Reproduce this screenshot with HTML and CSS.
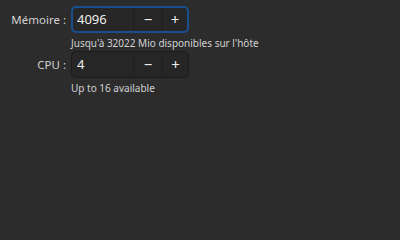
FILE: index.html
```html
<!DOCTYPE html>
<html>
<head>
<meta charset="utf-8">
<link rel="stylesheet" href="styles.css">
</head>
<body>
<div class="form">
  <div class="label">Mémoire :</div>
  <div class="spin focused">
    <div class="value">4096</div>
    <div class="btn">−</div>
    <div class="btn">+</div>
  </div>
  <div class="hint">Jusqu'à 32022 Mio disponibles sur l'hôte</div>
  <div class="label">CPU :</div>
  <div class="spin">
    <div class="value">4</div>
    <div class="btn">−</div>
    <div class="btn">+</div>
  </div>
  <div class="hint">Up to 16 available</div>
</div>
</body>
</html>
```
FILE: styles.css
```css
html, body {
  margin: 0;
  padding: 0;
  background: #2c2c2c;
  width: 400px;
  height: 200px;
  overflow: hidden;
  font-family: "Noto Sans", "Open Sans", sans-serif;
}
.form {
  display: grid;
  grid-template-columns: 66px 118px;
  column-gap: 5px;
  padding-top: 6px;
}
.label {
  grid-column: 1;
  text-align: right;
  color: #d2d2d2;
  font-size: 11.5px;
  line-height: 27px;
}
.spin {
  grid-column: 2;
  display: flex;
  height: 27px;
  box-sizing: border-box;
  background: #262626;
  border: 1px solid #1c1c1c;
  border-radius: 5px;
}
.spin.focused {
  border: 2px solid #1a4f8f;
}
.value {
  flex: 1;
  color: #eeeeec;
  font-size: 13px;
  line-height: 25px;
  padding-left: 5px;
}
.focused .value { line-height: 23px; padding-left: 4px; }
.btn {
  width: 28px;
  border-left: 1px solid #1f1f1f;
  color: #eeeeec;
  text-align: center;
  font-size: 15px;
  line-height: 25px;
}
.focused .btn { line-height: 23px; }
.spin .btn:last-child { width: 25px; }
.spin.focused .btn:last-child { width: 24px; }
.hint {
  grid-column: 2;
  color: #d2d2d2;
  font-size: 10px;
  line-height: 12px;
  padding-top: 4px;
  height: 18px;
  box-sizing: border-box;
  white-space: nowrap;
}
```
